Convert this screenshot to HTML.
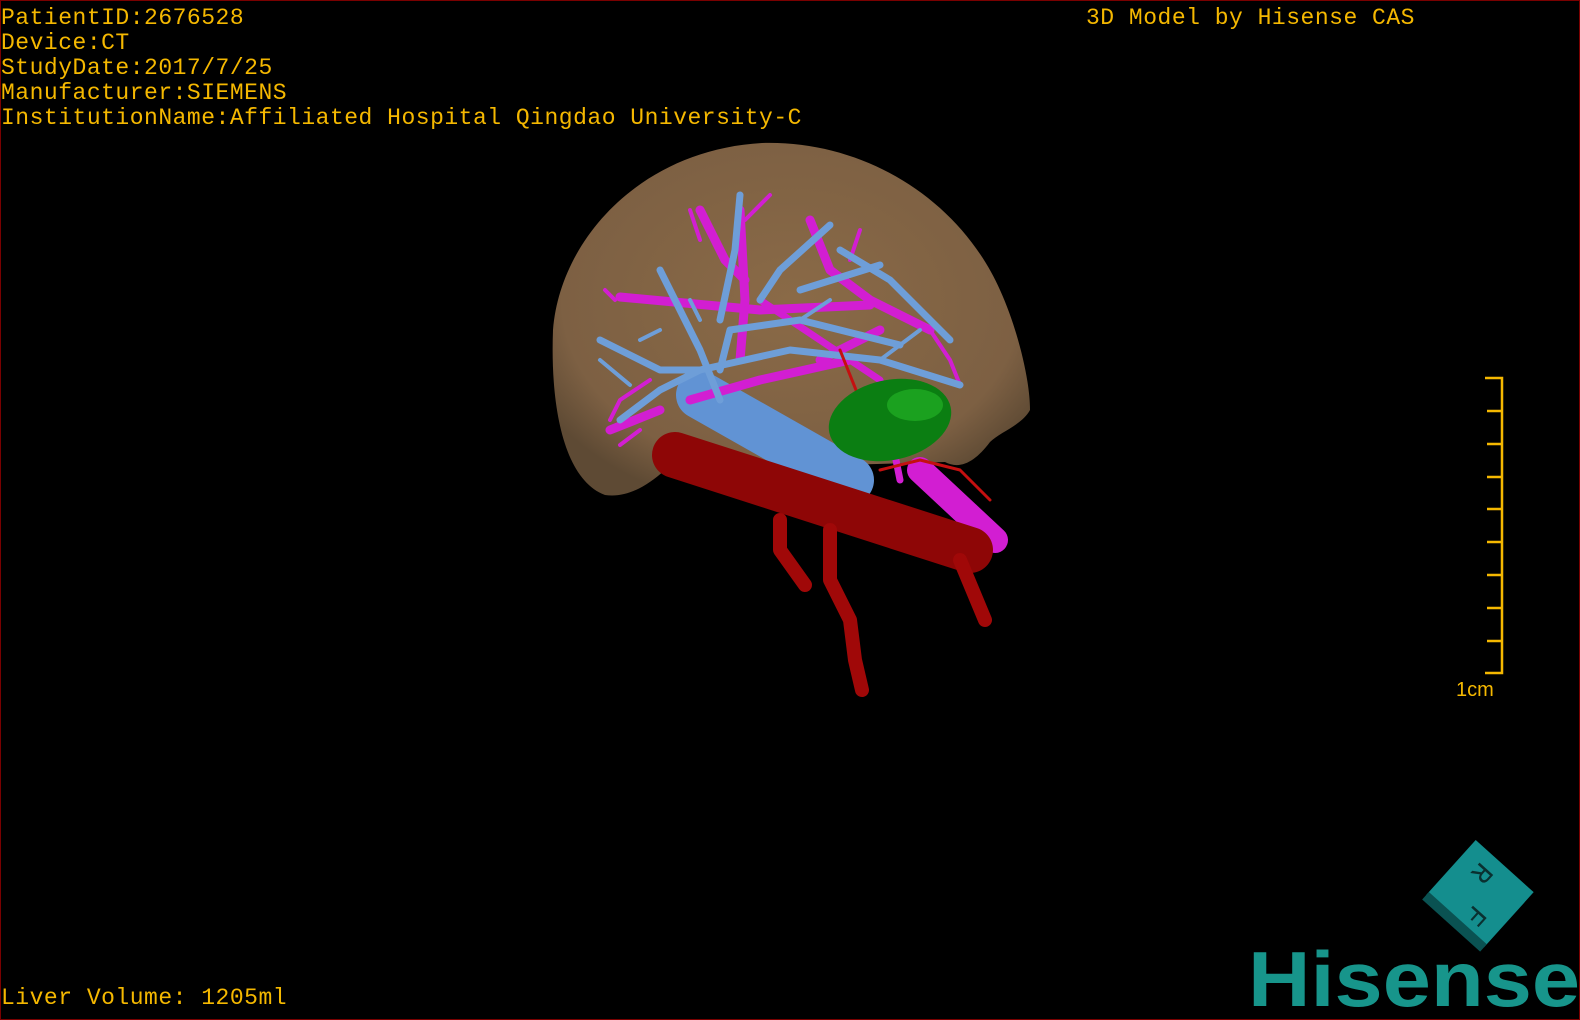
<!DOCTYPE html>
<html><head><meta charset="utf-8"><style>
html,body{margin:0;padding:0;background:#000;width:1580px;height:1020px;overflow:hidden}
#f{position:absolute;left:0;top:0;width:1578px;height:1018px;border:1px solid #7a0000}
.t{position:absolute;left:1px;color:#f5b800;font-family:"Liberation Mono","DejaVu Sans Mono",monospace;font-size:23px;line-height:25px;white-space:pre;letter-spacing:0.5px}
</style></head><body>
<div id="f"></div>
<div class="t" style="top:6px">PatientID:2676528
Device:CT
StudyDate:2017/7/25
Manufacturer:SIEMENS
InstitutionName:Affiliated Hospital Qingdao University-C</div>
<div class="t" style="left:1086px;top:6px">3D Model by Hisense CAS</div>
<div class="t" style="top:986px">Liver Volume: 1205ml</div>
<svg width="1580" height="1020" style="position:absolute;left:0;top:0">
<defs><radialGradient id="lg" cx="0.5" cy="0.45" r="0.6"><stop offset="0" stop-color="#8a6a47"/><stop offset="0.8" stop-color="#7d6043"/><stop offset="1" stop-color="#5e4a34"/></radialGradient></defs>
<path d="M605 495 C565 480 550 410 553 330 C560 240 640 150 762 143 C865 140 960 200 1000 290 C1018 330 1030 380 1030 410 C1022 425 1000 432 990 442 C975 462 960 470 945 462 L665 470 C645 488 625 498 605 495 Z" fill="url(#lg)"/>
<g stroke-linecap="round" stroke-linejoin="round" fill="none">
<line x1="700" y1="395" x2="850" y2="480" stroke="#6193d4" stroke-width="48"/>
<g stroke="#d21ed2" stroke-width="9">
<path d="M620 297 L760 310 L870 305"/><path d="M740 210 L745 300 L740 360"/><path d="M700 210 L725 260 L745 280"/><path d="M690 400 L760 380 L850 360"/><path d="M610 430 L660 410"/><path d="M810 220 L830 270 L870 300 L930 330"/><path d="M820 360 L880 330"/>
<path d="M920 470 L995 540" stroke-width="26"/><path d="M760 300 L880 380 L900 480" stroke-width="7"/>
</g>
<g stroke="#d21ed2" stroke-width="4">
<path d="M690 210 L700 240"/><path d="M770 195 L745 220"/><path d="M640 430 L620 445"/><path d="M615 300 L605 290"/><path d="M930 330 L950 360 L960 385"/><path d="M860 230 L850 260"/><path d="M650 380 L620 400 L610 420"/>
</g>
<g stroke="#6e9ed8" stroke-width="7">
<path d="M660 270 L700 350 L720 400"/><path d="M740 195 L735 250 L720 320"/><path d="M600 340 L660 370 L700 370 L790 350 L880 360 L960 385"/><path d="M720 370 L730 330 L800 320 L900 345"/><path d="M830 225 L780 270 L760 300"/><path d="M840 250 L890 280 L950 340"/><path d="M620 420 L660 390 L700 370"/><path d="M880 265 L800 290"/>
</g>
<g stroke="#6e9ed8" stroke-width="4"><path d="M600 360 L630 385"/><path d="M700 320 L690 300"/><path d="M800 320 L830 300"/><path d="M880 360 L920 330"/><path d="M640 340 L660 330"/></g>
<path d="M675 455 L970 550" stroke="#8e0606" stroke-width="46"/>
<g stroke="#a00808" stroke-width="14"><path d="M780 520 L780 550 L805 585"/><path d="M830 530 L830 580 L850 620 L855 660 L862 690"/><path d="M960 560 L985 620"/></g>
<g stroke="#c41010" stroke-width="3"><path d="M880 470 L920 460 L960 470 L990 500"/><path d="M860 400 L840 350"/></g>
</g>
<ellipse cx="890" cy="420" rx="62" ry="40" transform="rotate(-12 890 420)" fill="#0b7e12"/>
<ellipse cx="915" cy="405" rx="28" ry="16" fill="#1ba11f"/>
<g stroke="#f5b800" stroke-width="2.5" fill="none">
<path d="M1485 378 H1502 V673 H1485"/>
<path d="M1487 411H1502M1487 444H1502M1487 477H1502M1487 509H1502M1487 542H1502M1487 575H1502M1487 608H1502M1487 641H1502"/>
</g>
<text x="1456" y="696" fill="#f5b800" font-family="Liberation Sans,sans-serif" font-size="20">1cm</text>
<g transform="translate(1480 895) rotate(42)">
<rect x="-40" y="-38" width="78" height="74" fill="#148e8e"/>
<rect x="-40" y="32" width="78" height="10" fill="#0a5252"/>
<text x="-20" y="-8" font-family="Liberation Mono,monospace" font-size="28" fill="#0a3030" transform="rotate(90 -12 -18)">R</text>
<text x="4" y="28" font-family="Liberation Mono,monospace" font-size="28" fill="#0a3030" transform="rotate(90 12 18)">F</text>
</g>
<text x="1248" y="1006" font-family="Liberation Sans,sans-serif" font-weight="bold" font-size="78" fill="#17958b" textLength="332" lengthAdjust="spacingAndGlyphs">Hisense</text>
</svg>
</body></html>
